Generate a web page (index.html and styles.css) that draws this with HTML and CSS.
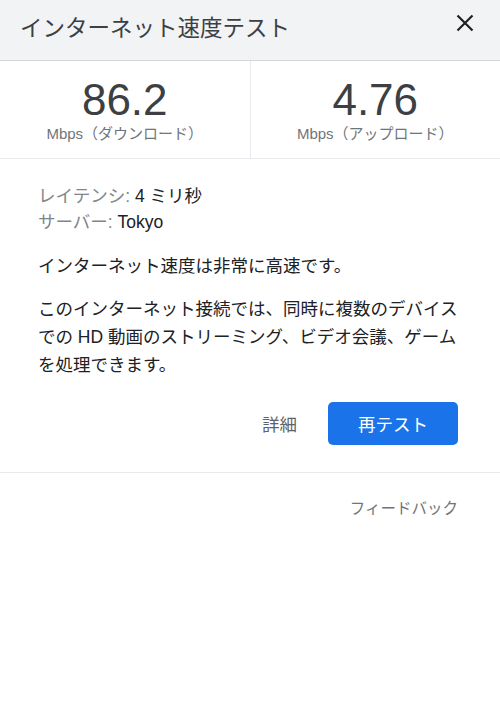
FILE: index.html
```html
<!DOCTYPE html>
<html lang="ja">
<head>
    <meta charset="UTF-8">
    <meta name="viewport" content="width=device-width, initial-scale=1.0">
    <title>インターネット速度テスト</title>
    <link rel="stylesheet" href="styles.css">
</head>
<body>
    <div class="speed-panel">
        <div class="header">
            <div class="title">インターネット速度テスト</div>
            <button class="close" aria-label="閉じる">
                <svg width="18" height="18" viewBox="0 0 18 18">
                    <path d="M1.5 1.5 L16.5 16.5 M16.5 1.5 L1.5 16.5" stroke="#202124" stroke-width="2.2" fill="none"/>
                </svg>
            </button>
        </div>

        <div class="stats">
            <div class="stat">
                <div class="value">86.2</div>
                <div class="unit">Mbps（ダウンロード）</div>
            </div>
            <div class="stat">
                <div class="value">4.76</div>
                <div class="unit">Mbps（アップロード）</div>
            </div>
        </div>

        <div class="content">
            <div class="meta">
                <div><span class="label">レイテンシ:</span> 4 ミリ秒</div>
                <div><span class="label">サーバー:</span> Tokyo</div>
            </div>
            <p class="summary">インターネット速度は非常に高速です。</p>
            <p class="detail">このインターネット接続では、同時に複数のデバイスでの HD 動画のストリーミング、ビデオ会議、ゲームを処理できます。</p>
            <div class="actions">
                <a href="#" class="more">詳細</a>
                <button class="retest">再テスト</button>
            </div>
        </div>

        <div class="footer">
            <a href="#">フィードバック</a>
        </div>
    </div>
</body>
</html>
```

FILE: styles.css
```css
body {
    font-family: 'Liberation Sans', Arial, 'Noto Sans CJK JP', sans-serif;
    background-color: #fff;
    color: #202124;
    margin: 0;
    padding: 0;
}

.speed-panel {
    width: 500px;
}

.header {
    display: flex;
    justify-content: space-between;
    align-items: flex-start;
    height: 61px;
    box-sizing: border-box;
    padding: 14px 26px 0 20px;
    background-color: #f1f3f4;
    border-bottom: 1px solid #d4d6d9;
}

.title {
    font-size: 22.5px;
    line-height: 30px;
    color: #3c4043;
}

.close {
    background: none;
    border: none;
    padding: 0;
    margin-top: 0;
    cursor: pointer;
    display: flex;
}

.stats {
    display: flex;
    border-bottom: 1px solid #e8eaed;
}

.stat {
    flex: 1;
    height: 97px;
    display: flex;
    flex-direction: column;
    align-items: center;
    padding-top: 14px;
    box-sizing: border-box;
}

.stat + .stat {
    border-left: 1px solid #e8eaed;
}

.value {
    font-size: 44px;
    line-height: 50px;
    color: #3c4043;
}

.unit {
    font-size: 15px;
    line-height: 18px;
    color: #70757a;
}

.content {
    padding: 24px 42px 27px 38px;
    font-size: 17.5px;
    color: #202124;
}

.meta {
    line-height: 26px;
}

.label {
    color: #80868b;
}

.summary {
    margin: 17px 0 0;
    line-height: 28px;
}

.detail {
    margin: 15px 0 0;
    line-height: 28px;
}

.actions {
    display: flex;
    justify-content: flex-end;
    align-items: center;
    gap: 31px;
    margin-top: 23px;
}

.more {
    color: #5f6368;
    text-decoration: none;
}

.retest {
    width: 130px;
    height: 43px;
    background-color: #1a73e8;
    color: #fff;
    border: none;
    border-radius: 5px;
    font-family: inherit;
    font-size: 17.5px;
    cursor: pointer;
}

.footer {
    border-top: 1px solid #e8eaed;
    display: flex;
    justify-content: flex-end;
    padding: 23px 42px;
}

.footer a {
    font-size: 15.5px;
    color: #70757a;
    text-decoration: none;
}
```
